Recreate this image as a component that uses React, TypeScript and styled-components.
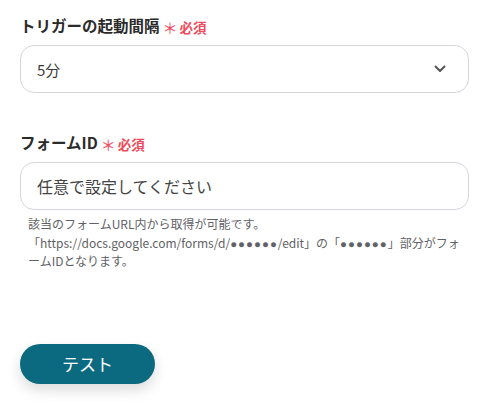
import React from "react";
import styled, { createGlobalStyle } from "styled-components";

const GlobalStyle = createGlobalStyle`
  body {
    margin: 0;
    background: #fff;
    font-family: "Noto Sans CJK JP", "Noto Sans", sans-serif;
    color: #333;
  }
`;

const Page = styled.div`
  width: 485px;
  height: 403px;
  box-sizing: border-box;
  padding: 14px 16px 0 20px;
  display: flex;
  flex-direction: column;
`;

const Field = styled.div<{ $gap: number }>`
  display: flex;
  flex-direction: column;
  margin-bottom: ${({ $gap }) => $gap}px;
`;

const Label = styled.div`
  display: flex;
  align-items: center;
  height: 22px;
  font-size: 15.5px;
  font-weight: 700;
  color: #2b2b2b;
  margin-bottom: 9px;
`;

const Required = styled.span`
  display: inline-flex;
  align-items: center;
  margin-left: 3px;
  color: #ee4b5d;
  font-size: 13.5px;
  font-weight: 700;
  position: relative;
  top: 2px;
`;

const Star = styled.span`
  font-size: 15px;
  font-weight: 400;
  line-height: 1;
  margin-right: 2px;
`;

const Box = styled.div`
  height: 48px;
  box-sizing: border-box;
  border: 1px solid #d3d6db;
  border-radius: 14px;
  display: flex;
  align-items: center;
  justify-content: space-between;
  padding: 0 22px 0 16px;
  font-size: 15px;
  color: #3a3a3a;
`;

const Placeholder = styled.span`
  font-size: 16px;
  color: #444;
`;

const Help = styled.div`
  margin-top: 5px;
  padding: 0 8px 0 8px;
  font-size: 12px;
  line-height: 18.5px;
  color: #5f6266;
`;

const Dots = styled.span`
  font-family: "Liberation Sans", sans-serif;
  font-size: 11.5px;
  line-height: 1;
  letter-spacing: 1px;
`;

const Button = styled.button`
  width: 135px;
  height: 40px;
  border: none;
  border-radius: 20px;
  background: #0b6a80;
  color: #fff;
  font-family: inherit;
  font-size: 17px;
  box-shadow: 0 6px 14px rgba(0, 0, 0, 0.14);
  cursor: pointer;
`;

const Chevron = () => (
  <svg width="12" height="8" viewBox="0 0 12 8">
    <path d="M1.5 1.5 L6 6 L10.5 1.5" fill="none" stroke="#555" strokeWidth="2" strokeLinecap="round" strokeLinejoin="round" />
  </svg>
);

const RequiredMark = () => (
  <Required>
    <Star>＊</Star>必須
  </Required>
);

export default function App() {
  return (
    <>
      <GlobalStyle />
      <Page>
        <Field $gap={38}>
          <Label>
            トリガーの起動間隔
            <RequiredMark />
          </Label>
          <Box>
            <span>5分</span>
            <Chevron />
          </Box>
        </Field>
        <Field $gap={73}>
          <Label>
            フォームID
            <RequiredMark />
          </Label>
          <Box>
            <Placeholder>任意で設定してください</Placeholder>
          </Box>
          <Help>
            該当のフォームURL内から取得が可能です。
            <br />
            「https://docs.google.com/forms/d/<Dots>●●●●●●</Dots>/edit」の「<Dots>●●●●●●</Dots>」部分がフォームIDとなります。
          </Help>
        </Field>
        <div>
          <Button>テスト</Button>
        </div>
      </Page>
    </>
  );
}
